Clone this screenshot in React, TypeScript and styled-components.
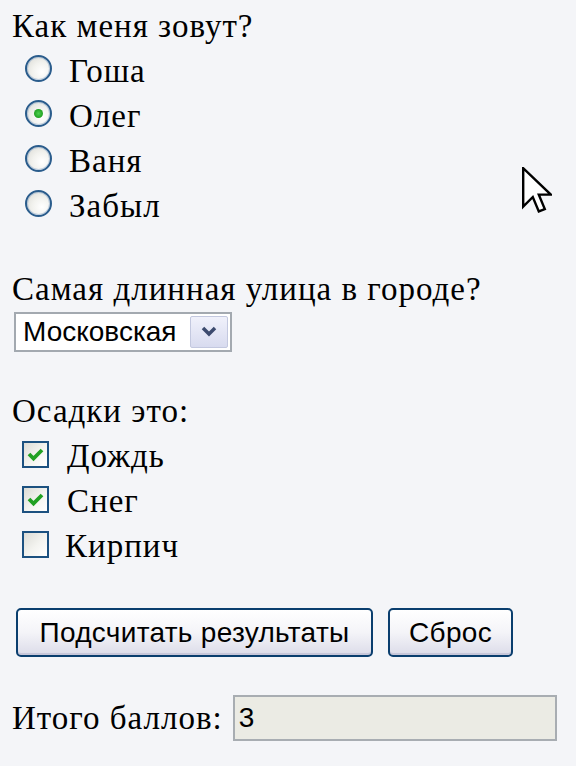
import React from "react";
import styled, { createGlobalStyle } from "styled-components";

const Global = createGlobalStyle`
  html, body { margin: 0; padding: 0; background: #f4f5f8; }
  body { width: 576px; height: 766px; overflow: hidden; }
`;

const Page = styled.form`
  position: relative;
  width: 576px;
  height: 766px;
  display: flex;
  flex-direction: column;
  font-family: "Liberation Serif", "Times New Roman", serif;
  font-size: 33px;
  letter-spacing: 1px;
  color: #000;
  background: #f4f5f8;
`;

const Label = styled.div<{ $top: number }>`
  height: 45px;
  margin-top: ${(p) => p.$top}px;
  padding-left: 12px;
  display: flex;
  align-items: center;
  white-space: nowrap;
`;

const Option = styled.label<{ $indent: number }>`
  height: 45px;
  display: flex;
  align-items: center;
  padding-left: ${(p) => p.$indent}px;
  white-space: nowrap;
`;

const RadioMark = styled.span<{ $on?: boolean }>`
  width: 23px;
  height: 23px;
  border-radius: 50%;
  border: 2px solid #2a5c8c;
  background: radial-gradient(circle at 65% 65%, #ffffff 0%, #f2f2ee 45%, #d8d8d2 100%);
  box-shadow: inset 0 0 0 1px rgba(140, 170, 205, 0.5);
  display: flex;
  align-items: center;
  justify-content: center;
  margin-right: 17px;
  margin-bottom: 6px;
  flex: none;
  &::after {
    content: "";
    display: ${(p) => (p.$on ? "block" : "none")};
    width: 9px;
    height: 9px;
    border-radius: 50%;
    background: radial-gradient(circle, #4fd04f 0%, #21a121 70%);
  }
`;

const CheckMark = styled.span<{ $on?: boolean; $gap: number }>`
  width: 23px;
  height: 23px;
  border: 2px solid #1c5180;
  background: linear-gradient(135deg, #dcdcd6 0%, #f4f4f0 55%, #ffffff 100%);
  display: flex;
  align-items: center;
  justify-content: center;
  margin-right: ${(p) => p.$gap}px;
  margin-bottom: 4px;
  flex: none;
`;

const SelectBox = styled.div`
  margin-left: 14px;
  width: 214px;
  height: 36px;
  border: 2px solid #a3a9b0;
  background: #fff;
  display: flex;
  align-items: stretch;
`;

const SelectText = styled.div`
  flex: 1;
  font-family: "Liberation Sans", Tahoma, sans-serif;
  font-size: 28px;
  letter-spacing: 0;
  padding-left: 7px;
  display: flex;
  align-items: center;
`;

const SelectButton = styled.div`
  width: 36px;
  margin: 2px;
  border: 1px solid #c3c8df;
  border-radius: 2px;
  background: linear-gradient(180deg, #f0f1fb 0%, #d8dbef 100%);
  display: flex;
  align-items: center;
  justify-content: center;
`;

const Buttons = styled.div`
  margin-top: 39px;
  padding-left: 16px;
  display: flex;
  gap: 15px;
  height: 49px;
`;

const Button = styled.button<{ $w: number }>`
  width: ${(p) => p.$w}px;
  height: 49px;
  padding: 0;
  border: 2px solid #0a3e6e;
  border-radius: 5px;
  background: linear-gradient(180deg, #ffffff 0%, #f4f4f8 50%, #dcdce9 100%);
  box-shadow: inset 0 -2px 0 #c7c7da;
  font-family: "Liberation Sans", Tahoma, sans-serif;
  font-size: 28px;
  letter-spacing: 0.3px;
  color: #000;
`;

const TotalRow = styled.div`
  margin-top: 38px;
  padding-left: 12px;
  height: 46px;
  display: flex;
  align-items: center;
  white-space: nowrap;
`;

const TotalInput = styled.div`
  margin-left: 10px;
  width: 316px;
  height: 42px;
  border: 2px solid #a8adb2;
  background: #ebebe4;
  font-family: "Liberation Sans", Tahoma, sans-serif;
  font-size: 28px;
  letter-spacing: 0;
  display: flex;
  align-items: center;
  padding-left: 4px;
  box-sizing: content-box;
`;

const Cursor = styled.svg`
  position: absolute;
  left: 522px;
  top: 167px;
`;

const Check = () => (
  <svg width="17" height="15" viewBox="0 0 17 15">
    <path d="M2 7 L6.5 11.5 L15 3" stroke="#21a121" strokeWidth="3.8" fill="none" strokeLinejoin="miter" />
  </svg>
);

export default function App() {
  return (
    <>
      <Global />
      <Page>
        <Label $top={4}>Как меня зовут?</Label>
        <Option $indent={25}><RadioMark />Гоша</Option>
        <Option $indent={25}><RadioMark $on />Олег</Option>
        <Option $indent={25}><RadioMark />Ваня</Option>
        <Option $indent={25}><RadioMark />Забыл</Option>
        <Label $top={38}>Самая длинная улица в городе?</Label>
        <SelectBox>
          <SelectText>Московская</SelectText>
          <SelectButton>
            <svg width="16" height="12" viewBox="0 0 16 12">
              <path d="M2 2 L8 8 L14 2" stroke="#3c4a6e" strokeWidth="3.5" fill="none" />
            </svg>
          </SelectButton>
        </SelectBox>
        <Label $top={37}>Осадки это:</Label>
        <Option $indent={22}><CheckMark $on $gap={18}><Check /></CheckMark>Дождь</Option>
        <Option $indent={22}><CheckMark $on $gap={18}><Check /></CheckMark>Снег</Option>
        <Option $indent={22}><CheckMark $gap={16} />Кирпич</Option>
        <Buttons>
          <Button type="button" $w={357}>Подсчитать результаты</Button>
          <Button type="button" $w={125}>Сброс</Button>
        </Buttons>
        <TotalRow>
          Итого баллов:
          <TotalInput>3</TotalInput>
        </TotalRow>
        <Cursor width="30" height="48" viewBox="0 0 12.5 20">
          <path d="M0.5 0.5 L0.5 16.5 L4.5 12.5 L7 18.5 L9.5 17.5 L7 11.5 L12 11.5 Z" fill="#fff" stroke="#000" strokeWidth="1" />
        </Cursor>
      </Page>
    </>
  );
}
